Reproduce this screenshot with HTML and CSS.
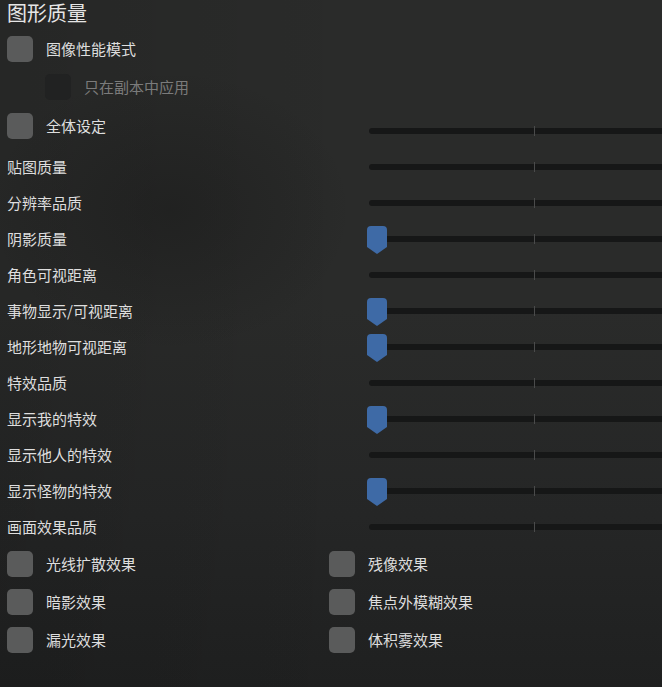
FILE: index.html
```html
<!DOCTYPE html>
<html lang="zh-CN">
<head>
<meta charset="utf-8">
<title>图形质量</title>
<link rel="stylesheet" href="styles.css">
</head>
<body>
<div class="page">
  <div class="title">图形质量</div>

  <div class="opt"><span class="box"></span><span class="lbl">图像性能模式</span></div>
  <div class="opt sub"><span class="box dark"></span><span class="lbl dim">只在副本中应用</span></div>

  <div class="sliders">
    <div class="srow">
      <div class="slabel opt-in"><span class="box"></span><span class="lbl">全体设定</span></div>
      <div class="track"><span class="tick"></span></div>
    </div>
    <div class="srow"><div class="slabel">贴图质量</div><div class="track"><span class="tick"></span></div></div>
    <div class="srow"><div class="slabel">分辨率品质</div><div class="track"><span class="tick"></span></div></div>
    <div class="srow"><div class="slabel">阴影质量</div><div class="track"><span class="tick"></span><svg class="thumb" viewBox="0 0 20 28"><path d="M4 0H16Q20 0 20 4V21L10 28L0 21V4Q0 0 4 0Z"/></svg></div></div>
    <div class="srow"><div class="slabel">角色可视距离</div><div class="track"><span class="tick"></span></div></div>
    <div class="srow"><div class="slabel">事物显示/可视距离</div><div class="track"><span class="tick"></span><svg class="thumb" viewBox="0 0 20 28"><path d="M4 0H16Q20 0 20 4V21L10 28L0 21V4Q0 0 4 0Z"/></svg></div></div>
    <div class="srow"><div class="slabel">地形地物可视距离</div><div class="track"><span class="tick"></span><svg class="thumb" viewBox="0 0 20 28"><path d="M4 0H16Q20 0 20 4V21L10 28L0 21V4Q0 0 4 0Z"/></svg></div></div>
    <div class="srow"><div class="slabel">特效品质</div><div class="track"><span class="tick"></span></div></div>
    <div class="srow"><div class="slabel">显示我的特效</div><div class="track"><span class="tick"></span><svg class="thumb" viewBox="0 0 20 28"><path d="M4 0H16Q20 0 20 4V21L10 28L0 21V4Q0 0 4 0Z"/></svg></div></div>
    <div class="srow"><div class="slabel">显示他人的特效</div><div class="track"><span class="tick"></span></div></div>
    <div class="srow"><div class="slabel">显示怪物的特效</div><div class="track"><span class="tick"></span><svg class="thumb" viewBox="0 0 20 28"><path d="M4 0H16Q20 0 20 4V21L10 28L0 21V4Q0 0 4 0Z"/></svg></div></div>
    <div class="srow"><div class="slabel">画面效果品质</div><div class="track"><span class="tick"></span></div></div>
  </div>

  <div class="effects">
    <div class="opt"><span class="box"></span><span class="lbl">光线扩散效果</span></div>
    <div class="opt"><span class="box"></span><span class="lbl">残像效果</span></div>
    <div class="opt"><span class="box"></span><span class="lbl">暗影效果</span></div>
    <div class="opt"><span class="box"></span><span class="lbl">焦点外模糊效果</span></div>
    <div class="opt"><span class="box"></span><span class="lbl">漏光效果</span></div>
    <div class="opt"><span class="box"></span><span class="lbl">体积雾效果</span></div>
  </div>
</div>
</body>
</html>
```

FILE: styles.css
```css
html, body {
  margin: 0;
  padding: 0;
  height: 100%;
  overflow: hidden;
}
body {
  background:
    radial-gradient(ellipse 260px 200px at 170px 210px, rgba(20,20,20,0.35), rgba(20,20,20,0) 70%),
    linear-gradient(to right, rgba(0,0,0,0.10), rgba(0,0,0,0) 55%),
    linear-gradient(to bottom, #2a2b2a 0%, #2a2b2a 45%, #252626 75%, #1f2020 100%);
  color: #dedede;
  font-family: "Noto Sans CJK SC", "Noto Sans", sans-serif;
  font-size: 15px;
}
.page {
  display: flex;
  flex-direction: column;
  padding-left: 7px;
}
.title {
  box-sizing: border-box;
  height: 30px;
  padding-top: 1px;
  font-size: 20px;
  line-height: 24px;
  color: #e6e6e6;
  white-space: nowrap;
}
.opt {
  display: flex;
  align-items: center;
  height: 38px;
}
.opt.sub {
  padding-left: 38px;
}
.box {
  flex: none;
  width: 26px;
  height: 26px;
  border-radius: 5px;
  background: #5a5b5b;
}
.box.dark {
  background: #212222;
}
.lbl {
  margin-left: 13px;
  line-height: 20px;
  white-space: nowrap;
}
.lbl.dim {
  color: #7b7b7b;
}
.sliders {
  display: flex;
  flex-direction: column;
  margin-top: 7px;
}
.srow {
  display: flex;
  align-items: center;
  height: 36px;
}
.slabel {
  flex: none;
  width: 362px;
  line-height: 20px;
  white-space: nowrap;
}
.slabel.opt-in {
  display: flex;
  align-items: center;
  align-self: flex-start;
}
.track {
  position: relative;
  flex: 1;
  height: 6px;
  background: #161717;
  border-radius: 3px 0 0 3px;
}
.tick {
  position: absolute;
  left: 165px;
  top: -2px;
  width: 1px;
  height: 10px;
  background: #4a4b4b;
}
.thumb {
  position: absolute;
  left: -2px;
  top: -10px;
  width: 20px;
  height: 28px;
  fill: #3e6aa6;
}
.effects {
  display: grid;
  grid-template-columns: 322px 1fr;
}
```
